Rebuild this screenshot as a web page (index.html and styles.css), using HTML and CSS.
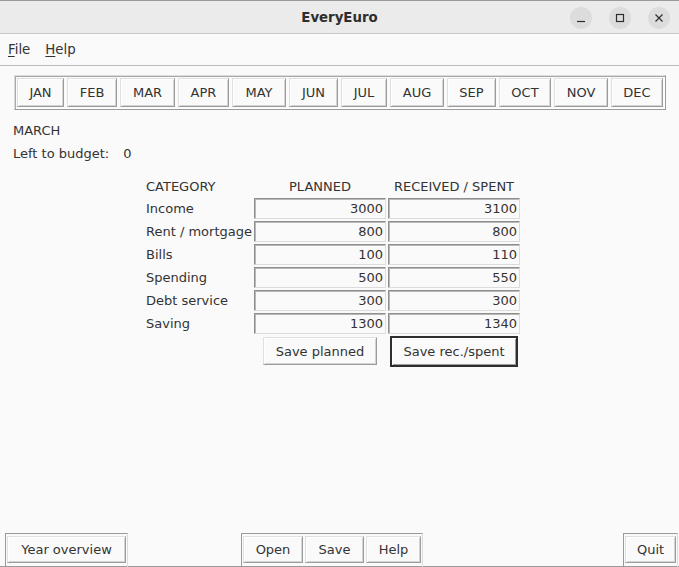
FILE: index.html
```html
<!DOCTYPE html>
<html>
<head>
<meta charset="utf-8">
<link rel="stylesheet" href="styles.css">
</head>
<body>
<div class="titlebar">
  <span class="title">EveryEuro</span>
  <div class="wbtns">
    <span class="wbtn"><svg width="22" height="22" viewBox="0 0 22 22"><path d="M7 14.5h8" stroke="#2e2e2e" stroke-width="1.2"/></svg></span>
    <span class="wbtn"><svg width="22" height="22" viewBox="0 0 22 22"><rect x="7.5" y="7.5" width="7" height="7" fill="none" stroke="#2e2e2e" stroke-width="1.2"/></svg></span>
    <span class="wbtn"><svg width="22" height="22" viewBox="0 0 22 22"><path d="M7.5 7.5l7 7M14.5 7.5l-7 7" stroke="#2e2e2e" stroke-width="1.2"/></svg></span>
  </div>
</div>
<div class="menubar">
  <span class="menu"><u>F</u>ile</span>
  <span class="menu"><u>H</u>elp</span>
</div>
<div class="main">
  <div class="months">
    <span class="btn m" style="width:47px">JAN</span>
    <span class="btn m" style="width:50px">FEB</span>
    <span class="btn m" style="width:55px">MAR</span>
    <span class="btn m" style="width:51px">APR</span>
    <span class="btn m" style="width:54px">MAY</span>
    <span class="btn m" style="width:49px">JUN</span>
    <span class="btn m" style="width:46px">JUL</span>
    <span class="btn m" style="width:54px">AUG</span>
    <span class="btn m" style="width:49px">SEP</span>
    <span class="btn m" style="width:52px">OCT</span>
    <span class="btn m" style="width:54px">NOV</span>
    <span class="btn m" style="width:52px">DEC</span>
  </div>
  <div class="month-name">MARCH</div>
  <div class="left"><span>Left to budget:</span><span class="leftval">0</span></div>
  <div class="table">
    <div class="lbl hdr">CATEGORY</div><div class="hdr c">PLANNED</div><div class="hdr c">RECEIVED / SPENT</div>
    <div class="lbl">Income</div><div class="field">3000</div><div class="field">3100</div>
    <div class="lbl">Rent / mortgage</div><div class="field">800</div><div class="field">800</div>
    <div class="lbl">Bills</div><div class="field">100</div><div class="field">110</div>
    <div class="lbl">Spending</div><div class="field">500</div><div class="field">550</div>
    <div class="lbl">Debt service</div><div class="field">300</div><div class="field">300</div>
    <div class="lbl">Saving</div><div class="field">1300</div><div class="field">1340</div>
    <div></div>
    <div class="cb"><span class="btn save">Save planned</span></div>
    <div class="cb"><span class="btn save focus">Save rec./spent</span></div>
  </div>
</div>
<div class="bottombar">
  <div class="group"><span class="btn b" style="width:119px">Year overview</span></div>
  <div class="group mid"><span class="btn b" style="width:60px">Open</span><span class="btn b" style="width:59px">Save</span><span class="btn b" style="width:55px">Help</span></div>
  <div class="group quit"><span class="btn b" style="width:51px">Quit</span></div>
</div>
</body>
</html>
```
FILE: styles.css
```css
html, body { margin: 0; padding: 0; }
body {
  width: 679px; height: 567px; overflow: hidden;
  background: #fafafa;
  font-family: "DejaVu Sans", sans-serif;
  font-size: 13px;
  color: #333;
  display: flex; flex-direction: column;
}
.titlebar {
  height: 34px; flex: none;
  background: #ebebeb;
  border-bottom: 1px solid #c9c9c9;
  border-top: 1px solid #9a9a9a;
  box-sizing: border-box;
  position: relative;
  display: flex; align-items: center; justify-content: center;
}
.title { font-weight: bold; font-size: 13.33px; color: #2e2e2e; }
.wbtns { position: absolute; right: 9px; top: 6px; display: flex; gap: 17px; }
.wbtn { width: 22px; height: 22px; border-radius: 50%; background: #dcdcdc; display: block; }
.wbtn svg { display: block; }
.menubar {
  height: 32px; flex: none; box-sizing: border-box;
  border-bottom: 1px solid #bdbdbd;
  display: flex; align-items: center; gap: 15px;
  padding: 0 0 0 8px;
  font-size: 13.33px;
}
.menu u { text-decoration: underline; text-underline-offset: 2px; }
.main { flex: 1; padding: 9px 0 0 14px; }
.months {
  display: inline-flex; gap: 3px;
  border: 1px solid; border-color: #dcdcdc #9a9a9a #9a9a9a #dcdcdc;
  box-shadow: inset 1px 1px 0 #a8a8a8, inset -1px -1px 0 #ffffff;
  padding: 2px;
}
.btn {
  display: inline-flex; align-items: center; justify-content: center;
  box-sizing: border-box;
  border: 1px solid; border-color: #e0e0e0 #9c9c9c #9c9c9c #e0e0e0;
  box-shadow: inset 1px 1px 0 #ffffff, inset -1px -1px 0 #d4d4d4;
  background: #fafafa;
}
.m { height: 29px; }
.month-name { margin: 13px 0 0 -1px; line-height: 16px; }
.left { margin: 7px 0 0 -1px; line-height: 16px; display: flex; }
.leftval { margin-left: 14px; }
.table {
  display: grid;
  grid-template-columns: 106px 132px 132px;
  grid-template-rows: 20px repeat(6, 21px) 33px;
  row-gap: 2px; column-gap: 2px;
  margin: 14px 0 0 132px;
}
.lbl { display: flex; align-items: center; white-space: nowrap; }
.hdr { display: flex; align-items: center; }
.c { display: flex; align-items: center; justify-content: center; }
.cb { display: flex; align-items: flex-start; justify-content: center; }
.field {
  box-sizing: border-box;
  border: 1px solid; border-color: #8e8e8e #dcdcdc #dcdcdc #8e8e8e;
  box-shadow: inset 1px 1px 0 #b8b8b8;
  text-align: right; padding-right: 2px; line-height: 19px;
  background: #fafafa;
}
.save { height: 28px; width: 114px; margin-top: 1px; }
.save.focus { width: 128px; height: 31px; margin-top: 0; border: 2px solid #2e2e2e; box-shadow: inset 1px 1px 0 #ffffff, inset -1px -1px 0 #9c9c9c; }
.bottombar {
  flex: none; display: flex; align-items: flex-start;
  padding: 0 1px 0 5px; height: 34px; border-bottom: 1px solid #9a9a9a; box-sizing: border-box;
}
.group {
  display: flex; gap: 2px;
  border: 1px solid; border-color: #9a9a9a #dcdcdc #dcdcdc #9a9a9a;
  padding: 2px 1px 1px 1px; height: 40px; box-sizing: border-box;
}
.mid { margin-left: 113px; }
.quit { margin-left: auto; }
.b { height: 27px; }
```
